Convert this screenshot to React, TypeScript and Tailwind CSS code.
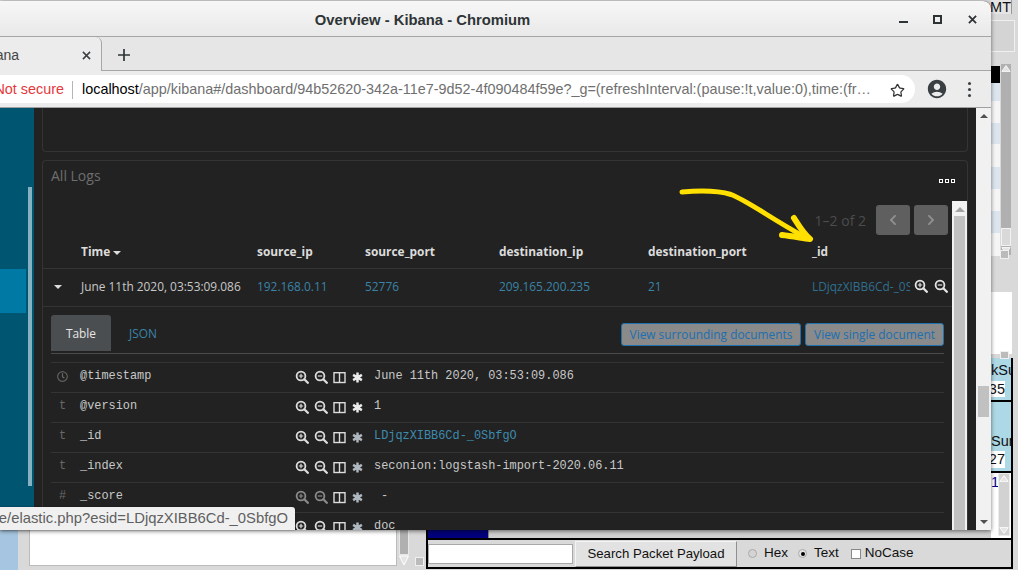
import { FaRegClock, FaChevronLeft, FaChevronRight } from "react-icons/fa";
import { MdAccountCircle } from "react-icons/md";
import { Star } from "lucide-react";

function Zoom({ minus, className = "" }: { minus?: boolean; className?: string }) {
  return (
    <svg viewBox="0 0 14 14" className={`w-[14px] h-[14px] ${className}`} fill="none" stroke="currentColor">
      <circle cx="6" cy="6" r="4.4" strokeWidth="1.8" />
      <path d="M9.3 9.3L12.8 12.8" strokeWidth="2.3" strokeLinecap="round" />
      <path d={minus ? "M3.8 6H8.2" : "M3.8 6H8.2M6 3.8V8.2"} strokeWidth="1.2" />
    </svg>
  );
}

function Columns() {
  return (
    <svg viewBox="0 0 13 13" className="w-[13px] h-[13px]" fill="none" stroke="currentColor" strokeWidth="1.4">
      <rect x="1" y="1.7" width="11" height="9.8" />
      <path d="M6.5 1.7V11.5" />
    </svg>
  );
}

function Asterisk({ className = "" }: { className?: string }) {
  return (
    <svg viewBox="0 0 12 12" className={`w-[11px] h-[11px] ${className}`} fill="none" stroke="currentColor" strokeWidth="2.7">
      <path d="M6 .5V11.500M1.200 3.200L10.800 8.800M10.800 3.200L1.200 8.800" />
    </svg>
  );
}

function Triangle({ up, down }: { up?: boolean; down?: boolean }) {
  return (
    <svg viewBox="0 0 12 9" className="w-[10px] h-[9px] shrink-0" fill="#e4e4e4" stroke="#fff">
      {up && <path d="M6 1L11 8H1Z" />}
      {down && <path d="M6 8L11 1H1Z" />}
    </svg>
  );
}

function MotifScroll({ h, thumb, light }: { h: string; thumb?: boolean; light?: boolean }) {
  return (
    <div className={`${h} w-[12px] shrink-0 flex flex-col items-center border ${light ? "bg-[#d2d2d2] border-[#ececec]" : "bg-[#b0b0b0] border-[#d9d9d9]"}`}>
      <Triangle up />
      <div className="flex-1" />
      {thumb && <div className="w-[10px] h-[18px] bg-[#d9d9d9] border border-[#f2f2f2]" />}
      <Triangle down />
    </div>
  );
}

const rows = [
  { type: "clock", name: "@timestamp", value: "June 11th 2020, 03:53:09.086" },
  { type: "t", name: "@version", value: "1" },
  { type: "t", name: "_id", value: "LDjqzXIBB6Cd-_0SbfgO", link: true, dim: true },
  { type: "t", name: "_index", value: "seconion:logstash-import-2020.06.11", dim: true },
  { type: "#", name: "_score", value: "-", dim: true, off: true, pad: true },
  { type: "t", name: "_type", value: "doc", dim: true },
];

function DetailRow({ row }: { row: (typeof rows)[number] }) {
  return (
    <div className="h-[30px] shrink-0 flex items-start pt-[5px] border-b border-[#343434] font-['Liberation_Mono',monospace] text-[11.9px] leading-[16px] text-[#c8c8c8]">
      <div className="w-[29px] pl-[6px] text-[#686868] flex items-center h-[16px]">
        {row.type === "clock" ? <FaRegClock className="w-[11px] h-[11px]" /> : <span className="pl-[2px]">{row.type}</span>}
      </div>
      <div className="w-[215px]">{row.name}</div>
      <div className="w-[79px] flex items-center gap-[5px] pt-[2px] text-[#dcdcdc]">
        <Zoom className={row.off ? "text-[#8a8a8a]" : ""} />
        <Zoom minus className={row.off ? "text-[#8a8a8a]" : ""} />
        <Columns />
        <Asterisk className={`ml-[1px] ${row.dim ? "text-[#aeb6be]" : "text-[#ececec]"}`} />
      </div>
      <div className={`${row.link ? "text-[#3e8bb0]" : ""} ${row.pad ? "pl-[7px]" : ""}`}>{row.value}</div>
    </div>
  );
}

function BrowserWindow() {
  return (
    <div className="absolute left-0 top-[1px] w-[991px] h-[529px] flex flex-col overflow-hidden rounded-tr-[8px] shadow-[0_1px_4px_rgba(0,0,0,0.55)] bg-[#222]">
      {/* title bar */}
      <div className="h-[36px] shrink-0 relative flex items-center justify-center pr-[146px] pt-[3px] bg-gradient-to-b from-[#f7f7f7] to-[#e9e9e9] border-b border-[#a6a6a6] font-['Liberation_Sans',sans-serif] font-bold text-[14.8px] text-[#2e3436]">
        Overview - Kibana - Chromium
        <div className="absolute right-[14px] top-[14px] flex items-start text-[#2e3436]">
          <div className="w-[9px] h-[2px] bg-current mt-[6px] mr-[25px]" />
          <div className="w-[9px] h-[9px] border-2 border-current mr-[26px]" />
          <svg viewBox="0 0 10 10" className="w-[9px] h-[9px]" stroke="currentColor" strokeWidth="2"><path d="M1 1L9 9M9 1L1 9" /></svg>
        </div>
      </div>
      {/* tabs */}
      <div className="h-[34px] shrink-0 flex bg-[#e6e6e6] font-['Liberation_Sans',sans-serif]">
        <div className="w-[102px] shrink-0 flex items-center justify-end pr-[10px] pt-[2px] bg-[#ececec] border-r border-[#a6a6a6] rounded-tr-[6px] overflow-hidden whitespace-nowrap text-[14px] text-[#444]">
          <span>Kibana</span>
          <svg viewBox="0 0 10 10" className="w-[9px] h-[9px] ml-[63px] shrink-0" stroke="#3c4043" strokeWidth="1.7"><path d="M1 1L9 9M9 1L1 9" /></svg>
        </div>
        <div className="flex-1 flex items-center border-b border-[#a6a6a6] pl-[16px] pt-[2px]">
          <svg viewBox="0 0 12 12" className="w-[12px] h-[12px]" stroke="#2e3436" strokeWidth="1.7"><path d="M6 0V12M0 6H12" /></svg>
        </div>
      </div>
      {/* toolbar */}
      <div className="h-[37px] shrink-0 flex items-center bg-[#ececec] border-b border-[#a0a0a0] font-['Liberation_Sans',sans-serif] text-[14.4px]">
        <div className="w-[915px] h-[28px] shrink-0 flex items-center pt-[2px] bg-white rounded-r-full whitespace-nowrap overflow-hidden">
          <div className="w-[64px] shrink-0 flex justify-end overflow-hidden text-[#e5383b]"><span>Not secure</span></div>
          <div className="w-px h-[18px] bg-[#b5b5b5] ml-[8px] mr-[9px]" />
          <span className="text-black">localhost</span>
          <span className="text-[#6f6f6f]">/app/kibana#/dashboard/94b52620-342a-11e7-9d52-4f090484f59e?_g=(refreshInterval:(pause:!t,value:0),time:(fr…</span>
          <div className="flex-1" />
          <Star className="w-[15px] h-[15px] mr-[10px] text-[#333]" strokeWidth={2} />
        </div>
        <MdAccountCircle className="w-[22px] h-[22px] ml-[11px] text-[#3a3f44]" />
        <div className="ml-[20px] flex flex-col gap-[3px]">
          <div className="w-[3px] h-[3px] rounded-full bg-[#3a3f44]" />
          <div className="w-[3px] h-[3px] rounded-full bg-[#3a3f44]" />
          <div className="w-[3px] h-[3px] rounded-full bg-[#3a3f44]" />
        </div>
      </div>
      {/* page */}
      <div className="flex-1 min-h-0 flex font-['Open_Sans',sans-serif]">
        <div className="w-[34px] shrink-0 bg-[#005571] flex overflow-hidden">
          <div className="w-[28px] pt-[161px]">
            <div className="w-[26px] h-[44px] bg-[#0079a5]" />
          </div>
          <div className="w-[4px] mt-[79px] h-[299px] bg-[#86b1c1]" />
        </div>
        <div className="flex-1 min-w-0 flex flex-col pl-[8px] pr-[8px] bg-[#222] overflow-hidden">
          <div className="h-[45px] shrink-0 -mt-[1px] border border-t-0 border-[#343434] rounded-b-[4px]" />
          <div className="flex-1 mt-[8px] min-h-0 flex flex-col border border-[#343434] border-b-0 rounded-t-[4px]">
            <div className="h-[40px] shrink-0 flex items-start justify-between pl-[8px] pr-[12px]">
              <span className="text-[14px] leading-[20px] pt-[5px] text-[#6e6e6e]">All Logs</span>
              <div className="flex gap-[2px] pt-[18px]">
                <div className="w-[4px] h-[4px] border border-white" />
                <div className="w-[4px] h-[4px] border border-white" />
                <div className="w-[4px] h-[4px] border border-white" />
              </div>
            </div>
            <div className="flex-1 min-h-0 flex">
              <div className="flex-1 min-w-0 flex flex-col overflow-hidden">
                <div className="h-[35px] shrink-0 flex items-start justify-end pt-[4px] pr-[4px]">
                  <span className="text-[14px] leading-[30px] pt-[1px] text-[#4c4c4c] mr-[10px]">1–2 of 2</span>
                  <div className="w-[34px] h-[30px] rounded-[3px] bg-[#5f5f5f] flex items-center justify-center text-[#8f8f8f] mr-[4px]"><FaChevronLeft className="w-[10px] h-[12px]" /></div>
                  <div className="w-[34px] h-[30px] rounded-[3px] bg-[#5f5f5f] flex items-center justify-center text-[#8f8f8f]"><FaChevronRight className="w-[10px] h-[12px]" /></div>
                </div>
                <div className="h-[33px] shrink-0 grid grid-cols-[38px_176px_108px_134px_149px_164px_1fr] items-center border-b border-[#343434] text-[11.9px] font-bold text-[#dcdcdc]">
                  <div />
                  <div className="flex items-center">Time<span className="ml-[3px] mt-[2px] border-x-[4px] border-x-transparent border-t-[4px] border-t-[#dcdcdc]" /></div>
                  <div>source_ip</div>
                  <div>source_port</div>
                  <div>destination_ip</div>
                  <div>destination_port</div>
                  <div>_id</div>
                </div>
                <div className="h-[38px] shrink-0 pb-[2px] grid grid-cols-[38px_176px_108px_134px_149px_164px_1fr] items-center border-b border-[#343434] text-[11.9px] text-[#c8c8c8]">
                  <div className="pl-[11px]"><div className="w-0 border-x-[4px] border-x-transparent border-t-[4px] border-t-[#dcdcdc]" /></div>
                  <div>June 11th 2020, 03:53:09.086</div>
                  <div className="text-[#3a84a8]">192.168.0.11</div>
                  <div className="text-[#3a84a8]">52776</div>
                  <div className="text-[#3a84a8]">209.165.200.235</div>
                  <div className="text-[#3a84a8]">21</div>
                  <div className="flex items-center text-[#2f6f8f]">
                    <span className="w-[98px] overflow-hidden whitespace-nowrap">LDjqzXIBB6Cd-_0SbfgO</span>
                    <Zoom className="ml-[4px] text-[#e4e4e4]" />
                    <Zoom minus className="ml-[6px] text-[#e4e4e4]" />
                  </div>
                </div>
                <div className="flex-1 min-h-0 flex flex-col px-[8px] pt-[8px]">
                  <div className="h-[39px] shrink-0 flex border-b border-[#4a4a4a] text-[11.9px]">
                    <div className="w-[60px] h-[36px] pt-[1px] rounded-t-[3px] bg-[#4b4e50] text-[#e6e6e6] flex items-center justify-center">Table</div>
                    <div className="w-[60px] h-[36px] pt-[1px] ml-[2px] text-[#3a84a8] flex items-center justify-center">JSON</div>
                    <div className="flex-1" />
                    <div className="w-[180px] h-[23px] mt-[8px] flex items-center justify-center rounded-[3px] bg-[#8a8a8a] border border-[#1f72ad] text-[#1c6fb0]">View surrounding documents</div>
                    <div className="w-[139px] h-[23px] mt-[8px] ml-[4px] flex items-center justify-center rounded-[3px] bg-[#8a8a8a] border border-[#1f72ad] text-[#1c6fb0]">View single document</div>
                  </div>
                  <div className="h-[9px] shrink-0 border-b border-[#343434]" />
                  {rows.map((r) => (
                    <DetailRow key={r.name} row={r} />
                  ))}
                </div>
              </div>
              {/* panel scrollbar */}
              <div className="w-[15px] shrink-0 bg-[#f1f1f1] flex flex-col items-center pt-[6px]">
                <div className="border-x-[5px] border-x-transparent border-b-[5px] border-b-[#a3a3a3]" />
                <div className="w-[11px] flex-1 mt-[4px] bg-[#c1c1c1]" />
              </div>
            </div>
          </div>
        </div>
        {/* page scrollbar */}
        <div className="w-[15px] shrink-0 bg-[#f1f1f1] flex flex-col items-center pt-[6px]">
          <div className="border-x-[4px] border-x-transparent border-b-[4px] border-b-[#505050]" />
          <div className="w-[11px] h-[31px] mt-[268px] bg-[#c1c1c1]" />
          <div className="flex-1" />
          <div className="border-x-[4px] border-x-transparent border-t-[4px] border-t-[#505050] mb-[6px]" />
        </div>
      </div>
    </div>
  );
}

function RightStrip() {
  const listRows = ["h-[18px] bg-[#dce5ee]", "h-[22px] bg-[#f5f5f5]", "h-[21px] bg-[#dce5ee]", "h-[23px] bg-[#f5f5f5]", "h-[22px] bg-[#dce5ee]", "h-[22px] bg-[#f5f5f5]", "h-[22px] bg-[#dce5ee]", "h-[23px] bg-[#f5f5f5]"];
  return (
    <div className="absolute left-[991px] top-0 w-[27px] h-[538px] flex flex-col bg-[#d9d9d9] font-['Liberation_Sans',sans-serif] text-[14.500px] text-[#111] overflow-hidden">
      <div className="h-[14px] shrink-0 w-[21px] flex justify-end overflow-hidden border-r border-[#999] leading-[14px] whitespace-nowrap bg-[#e4e4e4]">
        <span>GMT</span>
      </div>
      <div className="h-[32px] shrink-0 mt-[6px] w-[24px] border border-[#f0f0f0] border-l-0 bg-[#d4d4d4]" />
      <div className="h-[193px] shrink-0 mt-[11px] flex">
        <div className="w-[9px] flex flex-col pt-[3px]">
          <div className="h-[17px] shrink-0 bg-black" />
          {listRows.map((c, i) => (
            <div key={i} className={`${c} shrink-0`} />
          ))}
        </div>
        <MotifScroll h="h-[193px]" thumb />
      </div>
      <div className="h-[36px] shrink-0 relative">
        <div className="absolute left-[9px] top-[-6px] w-[9px] h-[9px] bg-[#bbb] border border-[#f0f0f0]" />
      </div>
      <div className="h-[62px] w-[21px] shrink-0 bg-white" />
      <div className="w-[22px] flex-1 mt-[4px] min-h-0 flex flex-col relative border-r-2 border-black">
        <div className="absolute left-[9px] top-[-7px] w-[9px] h-[8px] bg-[#bbb] border border-[#f0f0f0]" />
        <div className="h-[42px] shrink-0 bg-[#add8e6] flex flex-col pt-[2px]">
          <div className="h-[21px] leading-[21px] whitespace-nowrap overflow-hidden">kSum</div>
          <div className="h-[16px] w-[14px] leading-[16px] bg-white flex justify-end overflow-hidden"><span>35</span></div>
        </div>
        <div className="h-[2px] shrink-0 bg-black" />
        <div className="h-[69px] shrink-0 bg-[#add8e6] flex flex-col justify-end">
          <div className="h-[20px] leading-[20px] overflow-hidden whitespace-nowrap">Sum</div>
          <div className="h-[17px] w-[14px] leading-[17px] bg-white flex justify-end overflow-hidden mb-[3px]"><span>27</span></div>
        </div>
        <div className="h-[2px] shrink-0 bg-black" />
        <div className="flex-1 flex bg-white">
          <div className="w-[7px] shrink-0 text-[#00008b] leading-[16px] pt-[1px]">1</div>
          <MotifScroll h="h-[63px]" light />
        </div>
      </div>
    </div>
  );
}

function BottomStrip() {
  return (
    <div className="absolute left-0 top-[530px] w-[1018px] h-[40px] flex bg-[#d9d9d9] font-['Liberation_Sans',sans-serif] text-[13.500px] text-[#111]">
      <div className="w-[18px] bg-[#a6c5e0]" />
      <div className="w-[11px]" />
      <div className="w-[368px] h-[36px] bg-white border border-[#bbb] border-t-0" />
      <div className="w-[2px]" />
      <div className="w-[10px] h-[36px] flex flex-col">
        <div className="flex-1 bg-[#b0b0b0] border border-[#e8e8e8] border-t-0" />
        <svg viewBox="0 0 10 11" className="w-[10px] h-[11px]" fill="#e4e4e4" stroke="#fff"><path d="M5 10L9.500 1H.5Z" /></svg>
      </div>
      <div className="w-[6px]" />
      <div className="w-[9px] h-[9px] mt-[27px] bg-[#bbb] border border-[#f0f0f0]" />
      <div className="w-[2px]" />
      <div className="w-[587px] h-[39px] flex flex-col border-x-2 border-black">
        <div className="h-[8px] shrink-0 flex">
          <div className="w-[60px] bg-[#00007c]" />
          <div className="flex-1 bg-[#cfcfcf] border-l border-[#888]" />
        </div>
        <div className="flex-1 flex items-center border-y-2 border-black">
          <div className="w-[145px] h-[20px] bg-white border border-[#a8a8a8]" />
          <button className="w-[162px] h-[26px] ml-[2px] bg-[#e2e2e2] border border-[#f4f4f4] border-r-[#8f8f8f] border-b-[#8f8f8f] text-[13.200px]">Search Packet Payload</button>
          <div className="w-[9px] h-[9px] ml-[11px] rounded-full border border-[#aaa] bg-[#d4d4d4]" />
          <span className="ml-[7px]">Hex</span>
          <div className="w-[9px] h-[9px] ml-[10px] rounded-full border border-[#aaa] bg-[#e4e4e4] flex items-center justify-center"><div className="w-[4px] h-[4px] rounded-full bg-black" /></div>
          <span className="ml-[7px]">Text</span>
          <div className="w-[10px] h-[10px] ml-[12px] bg-white border border-[#888]" />
          <span className="ml-[4px]">NoCase</span>
        </div>
      </div>
    </div>
  );
}

export default function App() {
  return (
    <div className="relative w-[1018px] h-[570px] overflow-hidden bg-[#d9d9d9]">
      <BottomStrip />
      <RightStrip />
      <BrowserWindow />
      {/* annotation arrow */}
      <svg className="absolute left-0 top-0 w-[1018px] h-[570px] pointer-events-none" viewBox="0 0 1018 570" fill="none" stroke="#ffe000" strokeLinecap="round" strokeLinejoin="round">
        <path d="M682 192C700 190.500 716 190 731 194.500C748 201 770 218 803 236" strokeWidth="5" />
        <path d="M794 218C799 226 803 233 810 239C802 238 792 236 782 235" strokeWidth="6" />
      </svg>
      {/* link status bubble */}
      <div className="absolute left-0 top-[507px] w-[295px] h-[23px] flex justify-end items-center pr-[7px] overflow-hidden whitespace-nowrap rounded-tr-[3px] bg-[#f0f0f0] font-['Liberation_Sans',sans-serif] text-[14.800px] text-[#5f5f5f] shadow-[0_0_2px_rgba(0,0,0,0.4)]">
        <span>squert/ne/elastic.php?esid=LDjqzXIBB6Cd-_0SbfgO</span>
      </div>
    </div>
  );
}
